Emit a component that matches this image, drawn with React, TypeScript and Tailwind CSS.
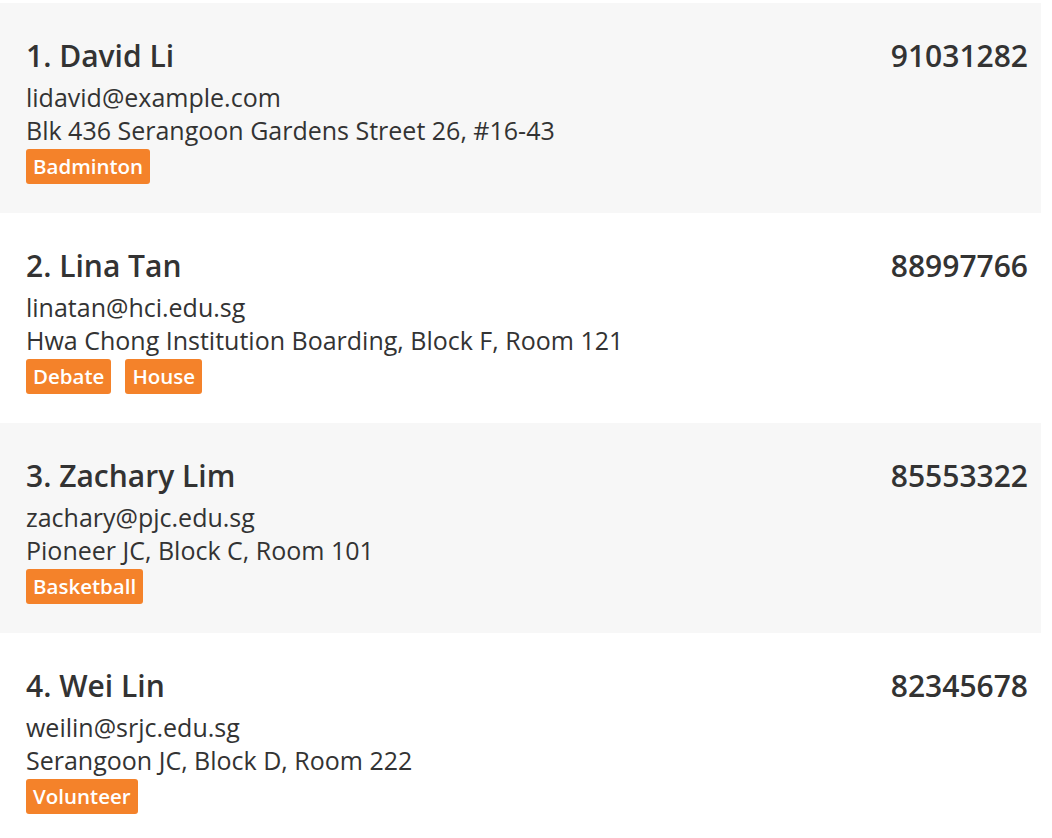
import React from 'react';

type Person = {
  name: string;
  phone: string;
  email: string;
  address: string;
  tags: string[];
};

const people: Person[] = [
  {
    name: 'David Li',
    phone: '91031282',
    email: 'lidavid@example.com',
    address: 'Blk 436 Serangoon Gardens Street 26, #16-43',
    tags: ['Badminton'],
  },
  {
    name: 'Lina Tan',
    phone: '88997766',
    email: 'linatan@hci.edu.sg',
    address: 'Hwa Chong Institution Boarding, Block F, Room 121',
    tags: ['Debate', 'House'],
  },
  {
    name: 'Zachary Lim',
    phone: '85553322',
    email: 'zachary@pjc.edu.sg',
    address: 'Pioneer JC, Block C, Room 101',
    tags: ['Basketball'],
  },
  {
    name: 'Wei Lin',
    phone: '82345678',
    email: 'weilin@srjc.edu.sg',
    address: 'Serangoon JC, Block D, Room 222',
    tags: ['Volunteer'],
  },
];

const PersonCard: React.FC<{ person: Person; index: number }> = ({ person, index }) => {
  const shaded = index % 2 === 0;
  return (
    <div className={`h-[210px] pl-[26px] pr-[13px] pt-[33px] ${shaded ? 'bg-[#f7f7f7]' : 'bg-white'}`}>
      <div className="flex justify-between text-[30px] leading-[40px] font-semibold text-[#333333]">
        <span>
          {index + 1}. {person.name}
        </span>
        <span>{person.phone}</span>
      </div>
      <div className="mt-[5px] text-[25px] leading-[33px] text-[#333333]">{person.email}</div>
      <div className="text-[25px] leading-[33px] text-[#333333]">{person.address}</div>
      <div className="mt-[2px] flex gap-[14px]">
        {person.tags.map((t) => (
          <span
            key={t}
            className="h-[35px] px-[7px] rounded-[3px] bg-[#f4822a] text-white text-[20.5px] leading-[35px] font-semibold"
          >
            {t}
          </span>
        ))}
      </div>
    </div>
  );
};

export default function App() {
  return (
    <div className="w-[1052px] h-[838px] overflow-hidden bg-white pt-[3px] pr-[11px]" style={{ fontFamily: '"Open Sans", "Noto Sans", sans-serif' }}>
      {people.map((p, i) => (
        <PersonCard key={p.name} person={p} index={i} />
      ))}
    </div>
  );
}
